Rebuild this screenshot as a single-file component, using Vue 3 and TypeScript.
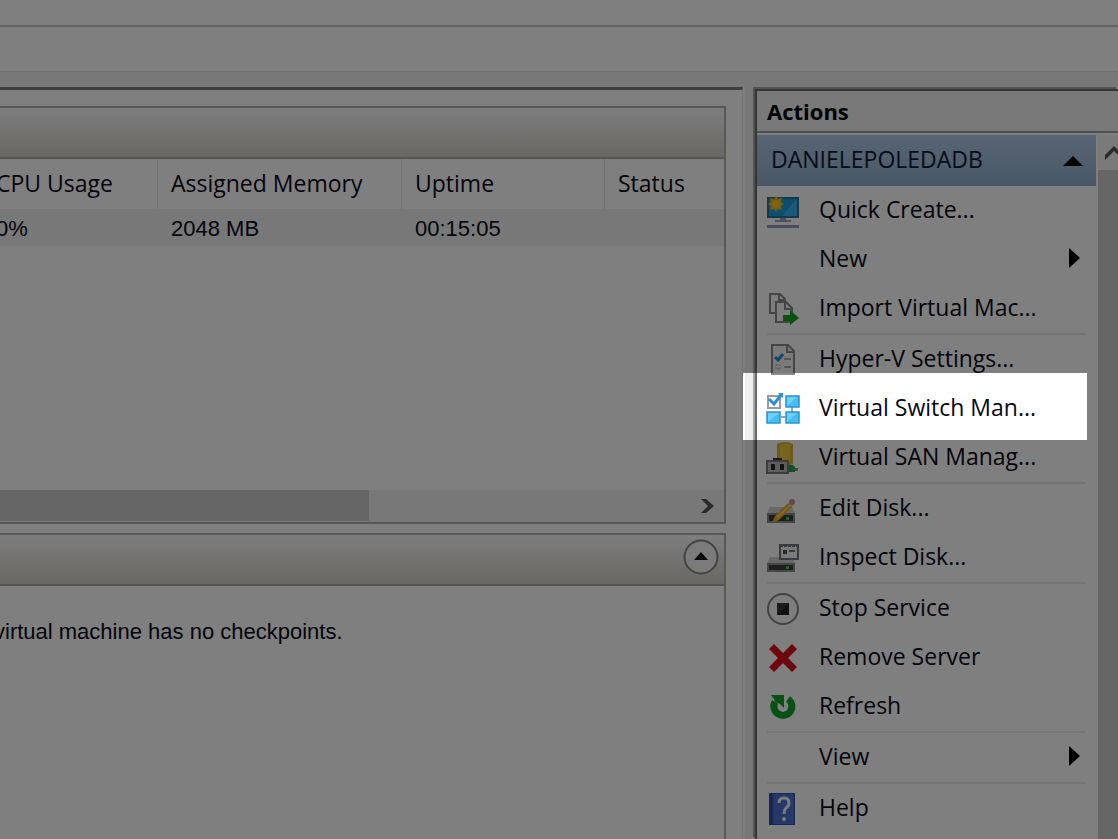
<script setup lang="ts">
interface Action {
  label: string
  icon?: string
  submenu?: boolean
  divider?: boolean
  highlighted?: boolean
}

const columns: string[] = ['CPU Usage', 'Assigned Memory', 'Uptime', 'Status']
const machine: string[] = ['0%', '2048 MB', '00:15:05', '']

const actions: Action[] = [
  { label: 'Quick Create...', icon: 'create' },
  { label: 'New', submenu: true },
  { label: 'Import Virtual Mac...', icon: 'import' },
  { label: 'Hyper-V Settings...', icon: 'settings', divider: true },
  { label: 'Virtual Switch Man...', icon: 'switch', highlighted: true },
  { label: 'Virtual SAN Manag...', icon: 'san' },
  { label: 'Edit Disk...', icon: 'edit', divider: true },
  { label: 'Inspect Disk...', icon: 'inspect' },
  { label: 'Stop Service', icon: 'stop', divider: true },
  { label: 'Remove Server', icon: 'remove' },
  { label: 'Refresh', icon: 'refresh' },
  { label: 'View', submenu: true, divider: true },
  { label: 'Help', icon: 'help', divider: true },
]
</script>

<template>
  <div class="window">
    <div class="menu-strip"></div>
    <div class="tool-strip"></div>
    <div class="panes">
      <main class="center">
        <section class="group">
          <header class="group-head"></header>
          <div class="list">
            <table>
              <colgroup>
                <col class="c-cpu" /><col class="c-mem" /><col class="c-up" /><col />
              </colgroup>
              <thead>
                <tr><th v-for="c in columns" :key="c" scope="col">{{ c }}</th></tr>
              </thead>
              <tbody>
                <tr><td v-for="(v, i) in machine" :key="i">{{ v }}</td></tr>
              </tbody>
            </table>
          </div>
          <div class="hscroll">
            <div class="hthumb"></div>
            <button type="button" class="hnext" aria-label="Scroll right">
              <svg width="14" height="16" viewBox="0 0 14 16"><path d="M0 1H5L13 8L5 15H0L7 8Z" fill="#555" /></svg>
            </button>
          </div>
        </section>
        <section class="group checkpoints">
          <header class="group-head">
            <button type="button" class="collapse" aria-label="Collapse">
              <svg width="36" height="36" viewBox="0 0 36 36">
                <circle cx="18" cy="18" r="16.5" fill="#f6f6f6" stroke="#858585" stroke-width="2" />
                <path d="M11 21L18 13L25 21Z" fill="#111" />
              </svg>
            </button>
          </header>
          <p class="message">virtual machine has no checkpoints.</p>
        </section>
      </main>

      <aside class="actions">
        <h2>Actions</h2>
        <div class="actions-body">
          <div class="actions-list">
            <button type="button" class="server">
              <span class="server-name">DANIELEPOLEDADB</span>
              <svg width="20" height="10" viewBox="0 0 20 10"><path d="M0 10L10 0L20 10Z" /></svg>
            </button>
            <ul>
              <li v-for="a in actions" :key="a.label" :class="{ divided: a.divider }">
                <button type="button" class="action">
                  <svg class="icon" viewBox="0 0 34 34" aria-hidden="true">
                    <g v-if="a.icon === 'create'">
                      <rect x="2" y="4" width="30" height="19" fill="#16a0dc" stroke="#316f9e" stroke-width="2" />
                      <path d="M16 22L31 5V22Z" fill="#36b4e8" />
                      <path d="M10 2L12 5L16 4L15 8L18 10L15 12L16 16L12 15L10 18L8 15L4 16L5 12L2 10L5 8L4 4L8 5Z" fill="#f0b41e" />
                      <circle cx="10" cy="10" r="4" fill="#ffc425" />
                      <path d="M14 24H20V26H25V28H9V26H14Z" fill="#9aa5b3" />
                      <path d="M1 31H33V34H1Z" fill="#929fb1" />
                    </g>
                    <g v-else-if="a.icon === 'import'">
                      <path d="M4 2H14L19 7V21H4Z" fill="#fafafa" stroke="#8b8b8b" stroke-width="2" />
                      <path d="M13 2V8H19" fill="none" stroke="#8b8b8b" stroke-width="2" />
                      <path d="M10 10H20L26 16V30H10Z" fill="#fafafa" stroke="#8b8b8b" stroke-width="2" />
                      <path d="M19 10V17H26" fill="none" stroke="#8b8b8b" stroke-width="2" />
                      <path d="M17 23H24V18L33 26L24 33V29H17Z" fill="#15a51e" />
                    </g>
                    <g v-else-if="a.icon === 'settings'">
                      <path d="M6 2H22L28 8V31H6Z" fill="#f5f5f5" stroke="#8a8a8a" stroke-width="2" />
                      <path d="M21 2V9H28" fill="none" stroke="#8a8a8a" stroke-width="2" />
                      <path d="M9 14L12 17L17 11" fill="none" stroke="#2b8fcd" stroke-width="3" />
                      <path d="M18 16H25M18 24H25" stroke="#aaa" stroke-width="2" />
                      <rect x="10" y="22" width="4" height="4" fill="none" stroke="#aaa" stroke-dasharray="2 1" />
                    </g>
                    <g v-else-if="a.icon === 'switch'">
                      <path d="M26 15V20M15 25H20" stroke="#8ba6b8" stroke-width="2" />
                      <rect x="2" y="4" width="12" height="12" fill="#fff" stroke="#999" stroke-width="2" />
                      <path d="M3 7L8 12L15 3" fill="none" stroke="#2b8de0" stroke-width="3" />
                      <path d="M12 1H17V6Z" fill="#2b8de0" />
                      <g fill="#45bef5" stroke="#2a95cb" stroke-width="1.500">
                        <rect x="20" y="4" width="13" height="11" />
                        <rect x="1" y="20" width="13" height="11" />
                        <rect x="20" y="20" width="13" height="11" />
                      </g>
                      <path d="M21 14V5H31ZM2 30V21H13ZM21 30V21H31Z" fill="#6dd0fa" />
                    </g>
                    <g v-else-if="a.icon === 'san'">
                      <path d="M11 3Q19 -1 27 3V23Q19 26 11 23Z" fill="#dcb22c" />
                      <path d="M14 4Q19 2 24 4V21H14Z" fill="#edc83f" />
                      <path d="M7 20V17H16V20Z" fill="#333" />
                      <rect x="1" y="20" width="21" height="12" fill="#bdbdbd" stroke="#787878" stroke-width="2" />
                      <path d="M5 23H9V29H5ZM14 23H18V29H14Z" fill="#272727" />
                      <path d="M23 27H32V30H23Z" fill="#8a8a8a" />
                      <path d="M23 24H27L29 26V31H23Z" fill="#20a640" />
                    </g>
                    <g v-else-if="a.icon === 'edit'">
                      <path d="M4 15H26L29 21H1Z" fill="#d0d0d0" />
                      <rect x="1" y="21" width="28" height="10" fill="#8d8d8d" />
                      <rect x="3" y="23" width="24" height="6" fill="#3c3c3c" />
                      <rect x="20" y="25" width="3" height="3" fill="#2dd04c" />
                      <path d="M6 31L9 24L22 11L26 15L13 28Z" fill="#e6ae28" />
                      <path d="M11 26L24 13" stroke="#ffd257" stroke-width="2" />
                      <path d="M22 11L24 9L28 13L26 15Z" fill="#ddd" />
                      <circle cx="26" cy="10" r="3" fill="#d88b91" />
                    </g>
                    <g v-else-if="a.icon === 'inspect'">
                      <path d="M4 16H26L29 22H1Z" fill="#d0d0d0" />
                      <rect x="1" y="22" width="28" height="9" fill="#8d8d8d" />
                      <rect x="3" y="24" width="24" height="5" fill="#3c3c3c" />
                      <rect x="20" y="25" width="3" height="3" fill="#2dd04c" />
                      <rect x="14" y="4" width="18" height="14" fill="#f2f2f2" stroke="#71757c" stroke-width="2" />
                      <path d="M14 5H32" stroke="#71757c" stroke-width="2" stroke-dasharray="3 1" />
                      <rect x="17" y="9" width="4" height="4" fill="#555" />
                      <path d="M23 10H29" stroke="#777" stroke-width="2" />
                    </g>
                    <g v-else-if="a.icon === 'stop'">
                      <circle cx="17" cy="17" r="15" fill="#fafafa" stroke="#858585" stroke-width="2" />
                      <rect x="11" y="11" width="12" height="12" fill="#3a3a3a" />
                      <path d="M11 23L23 11V23Z" fill="#222" />
                    </g>
                    <path v-else-if="a.icon === 'remove'" d="M3 8L8 3L17 12L26 3L31 8L22 17L31 26L26 31L17 22L8 31L3 26L12 17Z" fill="#dc0d1c" />
                    <g v-else-if="a.icon === 'refresh'">
                      <path d="M22 9A9 9 0 1 1 9 12" fill="none" stroke="#0ea32f" stroke-width="7" />
                      <path d="M5 5H18V18L14 14L9 12L8 9Z" fill="#0ea32f" />
                    </g>
                    <g v-else-if="a.icon === 'help'">
                      <rect x="3" y="1" width="26" height="32" fill="#2c4fa5" />
                      <rect x="7" y="2" width="21" height="30" fill="#4a70cf" />
                      <path d="M13 11Q13 6 18 6Q23 6 23 11Q23 14 20 16Q18 18 18 22" fill="none" stroke="#f4f4f4" stroke-width="3" />
                      <circle cx="18" cy="27" r="2" fill="#f4f4f4" />
                    </g>
                  </svg>
                  <span class="label">{{ a.label }}</span>
                  <svg v-if="a.submenu" class="more" width="11" height="20" viewBox="0 0 11 20"><path d="M0 0L11 10L0 20Z" /></svg>
                </button>
                <div v-if="a.highlighted" class="spotlight"></div>
              </li>
            </ul>
          </div>
          <div class="vscroll">
            <button type="button" aria-label="Scroll up">
              <svg width="20" height="16" viewBox="0 0 20 16"><path d="M0 15V10L9 1L18 10V15L9 6Z" fill="#555" /></svg>
            </button>
          </div>
        </div>
      </aside>
    </div>
  </div>
</template>

<style>
body {
  margin: 0;
}
</style>

<style scoped>
.window {
  position: relative;
  display: flex;
  flex-direction: column;
  height: 100vh;
  overflow: hidden;
  background: #f0f0f0;
  color: #080814;
  font-family: "Open Sans", "Noto Sans", sans-serif;
  font-size: 23px;
  line-height: 30px;
}
button {
  margin: 0;
  padding: 0;
  border: 0;
  background: none;
  color: inherit;
  font: inherit;
  text-align: left;
}
.menu-strip {
  flex: none;
  height: 25px;
  background: #fff;
  border-bottom: 2px solid #c4c4c4;
}
.tool-strip {
  flex: none;
  height: 44px;
  background: #fff;
  border-bottom: 1px solid #e2e2e2;
}
.panes {
  flex: 1;
  display: flex;
  gap: 12px;
  min-height: 0;
  padding-top: 15px;
}
.center {
  flex: 1;
  min-width: 0;
  display: flex;
  flex-direction: column;
  gap: 9px;
  box-sizing: border-box;
  padding: 16px 16px 0 0;
  background: #fff;
  border-top: 3px solid #7c7c7c;
  border-right: 1px solid #e8e8e8;
  box-shadow: 2px 0 0 #fff;
}
.group {
  border: 2px solid #b0b0b0;
  border-left: 0;
  background: #fff;
  overflow: hidden;
}
.group-head {
  box-sizing: border-box;
  display: flex;
  justify-content: flex-end;
  align-items: center;
  height: 51px;
  padding: 0 5px 6px 0;
  border-bottom: 2px solid #aaa;
  background: linear-gradient(#fdfdff, #eeecec 35%, #d2d0c6);
}
.list {
  min-height: 331px;
  margin-left: -17px;
}
table {
  width: 100%;
  table-layout: fixed;
  border-collapse: separate;
  border-spacing: 0;
}
.c-cpu {
  width: 175px;
}
.c-mem {
  width: 244px;
}
.c-up {
  width: 203px;
}
th {
  height: 50px;
  box-sizing: border-box;
  padding: 0 0 3px 13px;
  border-right: 1px solid #e2e2e2;
  font-weight: 400;
  text-align: left;
  white-space: nowrap;
}
th:last-child {
  border-right: 0;
}
td {
  height: 37px;
  box-sizing: border-box;
  padding: 2px 0 0 13px;
  background: #f0f0f0;
  font-family: "Liberation Sans", Arial, sans-serif;
  font-size: 22px;
}
.hscroll {
  display: flex;
  justify-content: space-between;
  height: 32px;
  background: #f0f0f0;
}
.hthumb {
  width: 51%;
  height: 31px;
  background: #cdcdcd;
}
.hnext {
  display: flex;
  align-items: center;
  padding-right: 9px;
}
.checkpoints {
  flex: 1;
  border-bottom: 0;
}
.collapse {
  display: flex;
}
.message {
  margin: 31px 0 0 -6px;
  font-family: "Liberation Sans", Arial, sans-serif;
  font-size: 22px;
  white-space: nowrap;
}
.actions {
  flex: 0 0 363px;
  box-sizing: border-box;
  display: flex;
  flex-direction: column;
  margin-top: 2px;
  background: #fff;
  border-top: 2px solid #6a6a6a;
  border-left: 2px solid #6a6a6a;
  box-shadow: -2px -2px 0 #a6a6a6;
}
h2 {
  flex: none;
  margin: 0;
  height: 40px;
  padding-left: 10px;
  border-bottom: 2px solid #a0a0a0;
  background: #f2f2f2;
  font-size: 22px;
  line-height: 40px;
  font-weight: 700;
  color: #000;
}
.actions-body {
  flex: 1;
  display: flex;
  gap: 2px;
  padding-top: 2px;
  min-height: 0;
}
.actions-list {
  flex: 1;
  min-width: 0;
}
.server {
  display: flex;
  align-items: center;
  justify-content: space-between;
  width: 100%;
  height: 51px;
  padding: 0 13px 0 14px;
  background: linear-gradient(#afc9e6, #93b2cf);
  color: #101830;
}
.server-name,
.label {
  padding-bottom: 3px;
}
ul {
  margin: 0;
  padding: 0;
  list-style: none;
}
li {
  position: relative;
}
.divided::before {
  content: "";
  display: block;
  height: 2px;
  margin: 0 10px;
  background: #ebebeb;
}
.action {
  display: flex;
  align-items: center;
  width: 100%;
  height: 49px;
  padding: 0 16px 0 9px;
}
.icon {
  flex: none;
  width: 34px;
  height: 34px;
  margin-right: 19px;
}
.label {
  flex: 1;
  white-space: nowrap;
}
.more {
  margin-bottom: 3px;
}
.spotlight {
  position: absolute;
  z-index: 5;
  top: -11px;
  right: 9px;
  bottom: -7px;
  left: -14px;
  box-shadow: 0 0 0 2000px rgba(0, 0, 0, 0.5);
  pointer-events: none;
}
.vscroll {
  flex: 0 0 20px;
  background: #cdcdcd;
  overflow: hidden;
}
.vscroll button {
  display: flex;
  align-items: center;
  width: 100%;
  height: 35px;
  padding-left: 7px;
  background: #f4f4f4;
}
.vscroll svg {
  flex: none;
}
</style>
